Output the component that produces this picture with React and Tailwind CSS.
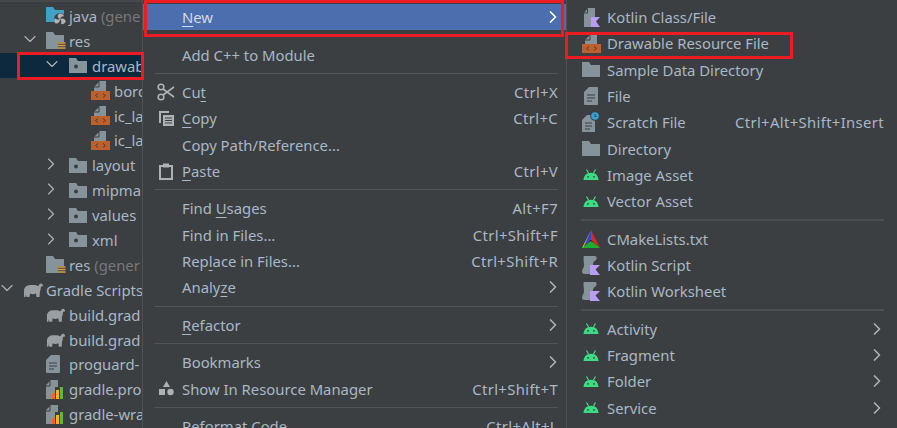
import React from "react";
import { ChevronRight, ChevronDown } from "lucide-react";

function Android() {
  return (
    <svg width="16" height="11" viewBox="0 0 16 11" className="shrink-0">
      <path d="M0.5 11C0.8 7 3 3.800 8 3.800s7.200 3.200 7.500 7.200z" fill="#3ddc84" />
      <path d="M3.500 0.500l2 3.500M12.500 0.500l-2 3.500" stroke="#3ddc84" strokeWidth="1.200" />
      <circle cx="5" cy="7.800" r="0.900" fill="#3c3f41" />
      <circle cx="11" cy="7.800" r="0.900" fill="#3c3f41" />
    </svg>
  );
}
function Folder({ dot, color = "#87939a" }) {
  return (
    <svg width="18" height="15" viewBox="0 0 18 15" className="shrink-0">
      <path d="M0 0h7l2 3h9v12H0z" fill={color} />
      {dot && <circle cx="7" cy="8.500" r="2" fill="#3c3f41" />}
    </svg>
  );
}
function ResFolder() {
  return (
    <svg width="20" height="18" viewBox="0 0 20 18" className="shrink-0">
      <path d="M0 0h7l2 3h9v7h-6v7H0z" fill="#87939a" />
      <path d="M12 11h7.500M12 13.500h7.500M12 16h7.500" stroke="#d9a343" strokeWidth="1.500" />
    </svg>
  );
}
function JavaFolder() {
  return (
    <svg width="22" height="18" viewBox="0 0 22 18" className="shrink-0">
      <path d="M0 0h7l2 3h9v5h-7v7H0z" fill="#40a0c8" />
      <circle cx="14" cy="12" r="6" fill="#3c3f41" />
      <path d="M14 12C11 11 11 7.500 13.500 6.500C16 6 18 7.500 18 9.500C16.500 9 15 10 14 12z" fill="#afb1b3" />
      <path d="M14 12C16.500 10.500 19.500 12 19.800 14.500C19 16.500 17 17.500 15 17C15.800 15.500 15.500 13.500 14 12z" fill="#afb1b3" />
      <path d="M14 12C14.300 14.500 12 17 9.500 16.500C8 15 7.800 12.500 9 11C10 12.500 12 13 14 12z" fill="#afb1b3" />
    </svg>
  );
}
function Xml() {
  return (
    <svg width="19" height="19" viewBox="0 0 19 19" className="shrink-0">
      <path d="M9 0h6v10H3V6z" fill="#87939a" />
      <path d="M8 1v5H3" fill="none" stroke="#3c3f41" strokeWidth="1" />
      <rect x="0" y="10" width="19" height="9" fill="#bf5f2a" />
      <path d="M7 12.500l-2.500 2 2.500 2M12 12.500l2.500 2-2.500 2" fill="none" stroke="#3c3f41" strokeWidth="1" />
    </svg>
  );
}
function Doc() {
  return (
    <svg width="14" height="18" viewBox="0 0 14 18" className="shrink-0">
      <path d="M5 0h8a1 1 0 0 1 1 1v16a1 1 0 0 1-1 1H1a1 1 0 0 1-1-1V5z" fill="#87939a" />
      <path d="M3 8h8M3 11h8M3 14h5" stroke="#3c3f41" strokeWidth="1" />
    </svg>
  );
}
function Scratch() {
  return (
    <svg width="18" height="20" viewBox="0 0 18 20" className="shrink-0">
      <path d="M5 3h8v17H0V8z" fill="#87939a" />
      <path d="M3 11h7M3 14h7M3 17h5" stroke="#3c3f41" strokeWidth="1" />
      <circle cx="13" cy="4" r="4.800" fill="#3c3f41" />
      <circle cx="13" cy="4" r="3.800" fill="#3a9fd8" />
      <path d="M13 2v2.500h1.500" stroke="#3c3f41" strokeWidth="1" fill="none" />
    </svg>
  );
}
function KotlinFile() {
  return (
    <svg width="17" height="19" viewBox="0 0 17 19" className="shrink-0">
      <path d="M5 0h7v9H8v10H1V5z" fill="#87939a" />
      <path d="M4.500 1v4H1" fill="none" stroke="#3c3f41" strokeWidth="1" />
      <path d="M8 9h9l-4 4.500 4 5.500H8z" fill="#b99bf8" />
    </svg>
  );
}
function KotlinScript() {
  return (
    <svg width="18" height="19" viewBox="0 0 18 19" className="shrink-0">
      <path d="M2 0h11c2 0 2 3 1 4s-3 1-3 5H8v9H3c-2 0-3-1-3-2 0-3 2-4 2-7S1 1 2 0z" fill="#87939a" />
      <path d="M8 9h10l-4.500 4.500L18 19H8z" fill="#b99bf8" />
    </svg>
  );
}
function CMake() {
  return (
    <svg width="18" height="18" viewBox="0 0 18 18" className="shrink-0">
      <path d="M9 0L1 17l8-6z" fill="#3648c8" />
      <path d="M9 0l9 18-9-7z" fill="#d62a2a" />
      <path d="M0 18h18l-9-7z" fill="#18b02c" />
      <path d="M9 0L0 18l1.500-.8z" fill="#e8c020" />
      <path d="M6 12.500L9 11l3 1.500L9 10z" fill="#111" />
    </svg>
  );
}
function Gradle({ large }) {
  return (
    <svg width={large ? 20 : 19} height="14" viewBox="0 0 20 14" className="shrink-0">
      <path d="M1 14V8C1 4 4 2 8 2H12C13 2 14 3 15 3C16 3 16 1 17.500 .5C19 0 20 1.500 20 2.500C20 4 18.500 3 18 4C17.500 5 18 7 17 8L16.500 14H13.500L13 10.500C11 11.500 8.500 11.500 7 10.500L6.500 14H3.500L3 11.500L2.500 14Z" fill="#9a9fa3" />
    </svg>
  );
}
function Props() {
  return (
    <svg width="18" height="19" viewBox="0 0 18 19" className="shrink-0">
      <path d="M5 0h7v7H9v12H0V5z" fill="#87939a" />
      <path d="M4 1v5H0" fill="none" stroke="#3c3f41" strokeWidth="1" />
      <rect x="6" y="13" width="3" height="6" fill="#f26522" />
      <rect x="10" y="10" width="3" height="9" fill="#f5b324" />
      <rect x="14" y="7" width="3" height="12" fill="#62b543" />
    </svg>
  );
}

const tree = [
  { l: 46, icon: <JavaFolder />, t: "java", g: " (gene" },
  { l: 46, ch: "d", c: 30, icon: <ResFolder />, t: "res" },
  { l: 69, ch: "d", c: 52, icon: <Folder dot />, t: "drawab", sel: true },
  { l: 91, icon: <Xml />, t: "bord" },
  { l: 91, icon: <Xml />, t: "ic_la" },
  { l: 91, icon: <Xml />, t: "ic_la" },
  { l: 69, ch: "r", c: 51, icon: <Folder dot />, t: "layout" },
  { l: 69, ch: "r", c: 51, icon: <Folder dot />, t: "mipma" },
  { l: 69, ch: "r", c: 51, icon: <Folder dot />, t: "values" },
  { l: 69, ch: "r", c: 51, icon: <Folder dot />, t: "xml" },
  { l: 46, icon: <ResFolder />, t: "res", g: " (gener" },
  { l: 23, ch: "d", c: 7, icon: <Gradle large />, t: "Gradle Scripts" },
  { l: 46, icon: <Gradle />, t: "build.grad" },
  { l: 46, icon: <Gradle />, t: "build.grad" },
  { l: 46, icon: <Doc />, t: "proguard-" },
  { l: 46, icon: <Props />, t: "gradle.pro" },
  { l: 46, icon: <Props />, t: "gradle-wra" },
];

function U({ children }) {
  return <span className="underline underline-offset-[3px] decoration-1">{children}</span>;
}

function Row({ icon, label, shortcut, arrow, active, sub }) {
  return (
    <div className={`h-[26.3px] flex items-center ${active ? "bg-[#4b6eaf] text-[#d3dbe8]" : ""} ${sub ? "pr-[13px]" : "pr-[8px]"}`}>
      <div className={`shrink-0 flex justify-center items-center ${sub ? "w-[40px] pl-[8px]" : "w-[39px] pl-[7px]"}`}>{icon}</div>
      <div className="whitespace-nowrap">{label}</div>
      <div className="flex-1" />
      {shortcut && <div className="whitespace-nowrap tracking-[0.35px]">{shortcut}</div>}
      {arrow && (
        <ChevronRight
          size={20}
          strokeWidth={2}
          className={`shrink-0 ${active ? "text-white" : "text-[#afb1b3]"} ${sub ? "-mr-[3px]" : "-mr-[5px]"}`}
        />
      )}
    </div>
  );
}
function Sep({ sub }) {
  return (
    <div className={`h-[11.2px] flex items-center ${sub ? "pl-[14px] pr-[13px]" : "pl-[12px] pr-[8px]"}`}>
      <div className={`w-full ${sub ? "h-[2px] bg-[#4d4f51]" : "h-px bg-[#535557]"}`} />
    </div>
  );
}

const Scissors = (
  <svg width="18" height="18" viewBox="0 0 18 18" fill="none" stroke="#afb1b3" strokeWidth="1.600">
    <circle cx="4" cy="4" r="2.800" /><circle cx="4" cy="14" r="2.800" />
    <path d="M6 6l11 8M6 12L17 4" />
  </svg>
);
const CopyI = (
  <svg width="17" height="17" viewBox="0 0 17 17">
    <path d="M1 1h10v2H3v10H1z" fill="#afb1b3" />
    <path d="M5 5h11v11H5z" fill="#afb1b3" />
    <path d="M7 8h7M7 10.500h7M7 13h7" stroke="#3c3f41" strokeWidth="1" />
  </svg>
);
const PasteI = (
  <svg width="14" height="17" viewBox="0 0 14 17" fill="none">
    <rect x="1" y="3" width="12" height="13" stroke="#afb1b3" strokeWidth="2" />
    <rect x="4" y="0.500" width="6" height="4" fill="#afb1b3" />
  </svg>
);
const Shapes = (
  <svg width="15" height="15" viewBox="0 0 15 15">
    <path d="M7.500 0l3.500 6H4z" fill="#afb1b3" />
    <rect x="0" y="8" width="6" height="6" fill="#afb1b3" />
    <circle cx="11.500" cy="11" r="3.200" fill="#afb1b3" />
  </svg>
);
const Gray = <Folder />;

export default function App() {
  return (
    <div className="relative w-[897px] h-[428px] overflow-hidden bg-[#3c3f41] text-[#a9b7c6] text-[14.85px] leading-5 flex" style={{ fontFamily: '"Noto Sans", sans-serif' }}>
      {/* project tree */}
      <div className="w-[142px] shrink-0 pt-[1.5px] border-t-2 border-[#45494a] overflow-hidden">
        {tree.map((r, i) => (
          <div key={i} className={`relative h-[24.9px] flex items-center whitespace-nowrap ${r.sel ? "bg-[#0d293e]" : ""}`} style={{ paddingLeft: r.l }}>
            {r.ch === "d" && <ChevronDown size={20} strokeWidth={1.400} className="absolute text-[#afb1b3] top-[1px]" style={{ left: r.c - 10 }} />}
            {r.ch === "r" && <ChevronRight size={20} strokeWidth={1.400} className="absolute text-[#afb1b3] top-[1px]" style={{ left: r.c - 10 }} />}
            <div className="w-[23px] shrink-0 flex items-center">{r.icon}</div>
            <span>{r.t}</span>
            {r.g && <span className="text-[#787878] whitespace-pre">{r.g}</span>}
          </div>
        ))}
      </div>

      {/* main menu */}
      <div className="w-[424px] shrink-0 pt-[4px] border-l border-[#515151]">
        <Row active label={<><U>N</U>ew</>} arrow />
        <Sep />
        <Row label="Add C++ to Module" />
        <Sep />
        <Row icon={Scissors} label={<>Cu<U>t</U></>} shortcut="Ctrl+X" />
        <Row icon={CopyI} label={<><U>C</U>opy</>} shortcut="Ctrl+C" />
        <Row label="Copy Path/Reference..." />
        <Row icon={PasteI} label={<><U>P</U>aste</>} shortcut="Ctrl+V" />
        <Sep />
        <Row label={<>Find <U>U</U>sages</>} shortcut="Alt+F7" />
        <Row label="Find in Files..." shortcut="Ctrl+Shift+F" />
        <Row label={<>Rep<U>l</U>ace in Files...</>} shortcut="Ctrl+Shift+R" />
        <Row label={<>Analy<U>z</U>e</>} arrow />
        <Sep />
        <Row label={<><U>R</U>efactor</>} arrow />
        <Sep />
        <Row label="Bookmarks" arrow />
        <Row icon={Shapes} label="Show In Resource Manager" shortcut="Ctrl+Shift+T" />
        <Sep />
        <Row label="Reformat Code" shortcut="Ctrl+Alt+L" />
      </div>

      {/* submenu */}
      <div className="flex-1 min-w-0 pt-[4px] border-l border-[#515151]">
        <Row sub icon={<KotlinFile />} label="Kotlin Class/File" />
        <Row sub icon={<Xml />} label="Drawable Resource File" />
        <Row sub icon={Gray} label="Sample Data Directory" />
        <Row sub icon={<Doc />} label="File" />
        <Row sub icon={<Scratch />} label="Scratch File" shortcut="Ctrl+Alt+Shift+Insert" />
        <Row sub icon={Gray} label="Directory" />
        <Row sub icon={<Android />} label="Image Asset" />
        <Row sub icon={<Android />} label="Vector Asset" />
        <Sep sub />
        <Row sub icon={<CMake />} label="CMakeLists.txt" />
        <Row sub icon={<KotlinScript />} label="Kotlin Script" />
        <Row sub icon={<KotlinScript />} label="Kotlin Worksheet" />
        <Sep sub />
        <Row sub icon={<Android />} label="Activity" arrow />
        <Row sub icon={<Android />} label="Fragment" arrow />
        <Row sub icon={<Android />} label="Folder" arrow />
        <Row sub icon={<Android />} label="Service" arrow />
      </div>

      {/* red annotation boxes */}
      <div className="absolute left-[17px] top-[52px] w-[127px] h-[28px] border-[3px] border-[#ed1c24]" />
      <div className="absolute left-[144px] top-0 w-[420px] h-[37px] border-[3px] border-[#ed1c24]" />
      <div className="absolute left-[565px] top-[32px] w-[228px] h-[27px] border-[3px] border-[#ed1c24]" />
    </div>
  );
}
